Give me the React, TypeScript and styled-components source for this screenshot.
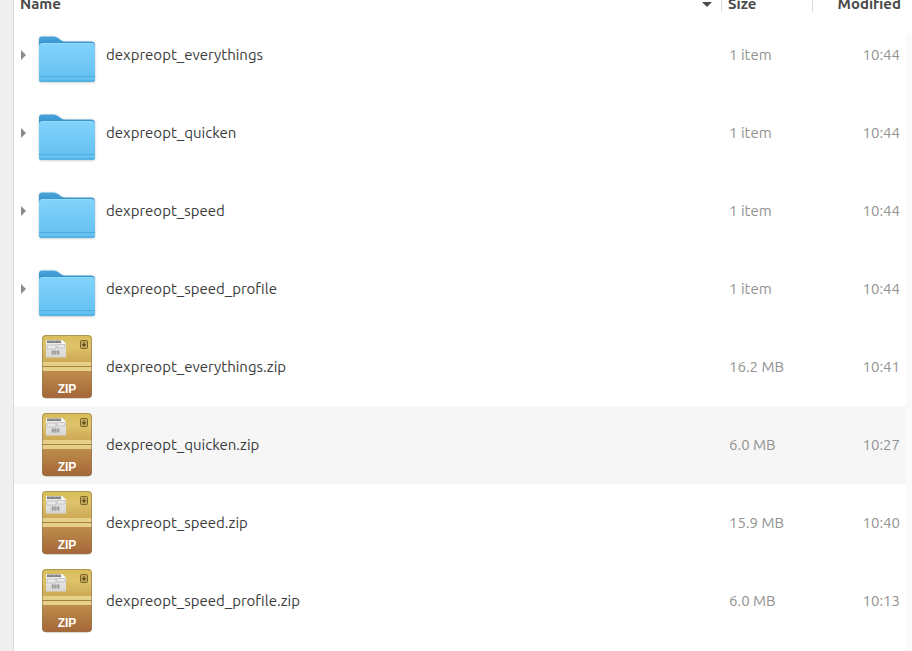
import React from "react";
import styled, { createGlobalStyle } from "styled-components";

const GlobalStyle = createGlobalStyle`
  * { box-sizing: border-box; }
  html, body, #root { height: 100%; }
  body {
    margin: 0;
    background: #ffffff;
    color: #3b3b3b;
    font-family: Ubuntu, "Noto Sans", sans-serif;
    font-size: 15px;
    line-height: 18px;
    overflow: hidden;
  }
`;

const Window = styled.div`
  display: flex;
  min-height: 100%;
`;

const SidebarEdge = styled.aside`
  flex: none;
  width: 14px;
  background: #efefef;
  border-right: 1px solid #dadada;
`;

const FileTable = styled.table`
  display: block;
  flex: 1;
  min-width: 0;
`;

const TableHead = styled.thead`
  display: block;
`;

const TableBody = styled.tbody`
  display: block;
`;

const HeaderRow = styled.tr`
  display: grid;
  grid-template-columns: 1fr 91px 93px;
  height: 16px;
  overflow: hidden;
`;

const HeaderCell = styled.th<{ $divided?: boolean }>`
  display: flex;
  align-items: flex-end;
  height: 12px;
  padding: 0;
  border-right: ${(p) => (p.$divided ? "1px solid #dcdcdc" : "none")};
`;

const SortButton = styled.button<{ $end?: boolean }>`
  display: flex;
  flex: 1;
  align-items: center;
  justify-content: ${(p) => (p.$end ? "flex-end" : "space-between")};
  padding: 0 ${(p) => (p.$end ? "5px" : "9px")} 0 6px;
  border: 0;
  background: none;
  color: #4a4a4a;
  font: inherit;
  font-weight: 700;
  line-height: 16px;
  cursor: pointer;
`;

const FileRow = styled.tr<{ $shaded?: boolean }>`
  display: grid;
  grid-template-columns: 1fr 91px 93px;
  align-items: center;
  height: 78px;
  background: ${(p) => (p.$shaded ? "#f6f6f6" : "transparent")};
`;

const NameCell = styled.td`
  display: flex;
  align-items: center;
  padding: 0 0 0 5px;
`;

const Expander = styled.span`
  display: flex;
  width: 16px;
`;

const ExpandButton = styled.button`
  display: flex;
  padding: 0;
  border: 0;
  background: none;
  cursor: pointer;
`;

const FileName = styled.span`
  padding-left: 7px;
`;

const DetailCell = styled.td<{ $end?: boolean }>`
  padding: 0 6px 0 7px;
  color: #929292;
  text-align: ${(p) => (p.$end ? "right" : "left")};
`;

const ScrollTrough = styled.div`
  flex: none;
  width: 6px;
  margin-top: 35px;
  background: #fafafa;
`;

const FolderIcon = () => (
  <svg width="64" height="64" viewBox="0 0 64 64" aria-hidden="true">
    <defs>
      <linearGradient id="folderFront" x1="0" y1="0" x2="0" y2="1">
        <stop offset="0" stopColor="#82d3fc" />
        <stop offset="1" stopColor="#62bff0" />
      </linearGradient>
      <linearGradient id="folderBack" x1="0" y1="0" x2="0" y2="1">
        <stop offset="0" stopColor="#48a5dc" />
        <stop offset="0.18" stopColor="#3991ca" />
      </linearGradient>
      <filter id="folderShadow" x="-10%" y="-10%" width="120%" height="125%">
        <feDropShadow dx="0" dy="0.5" stdDeviation="1" floodOpacity="0.25" />
      </filter>
    </defs>
    <path
      filter="url(#folderShadow)"
      fill="url(#folderBack)"
      d="M4 56V16.500q0-3 3-3h12q2 0 4 1.500l3 2.200q2 1.300 4 1.300h26q4 0 4 4v33.500q0 3-3 3H7q-3 0-3-3z"
    />
    <path
      fill="url(#folderFront)"
      d="M4 56V24q0-4 4-4h48q4 0 4 4v32q0 3-3 3H7q-3 0-3-3z"
    />
    <path d="M4.500 23q1-2.500 3.500-2.500h48q2.500 0 3.500 2.500" fill="none" stroke="#9bdefe" strokeWidth="0.700" />
    <path d="M4 53.500h56" stroke="#4eabde" />
    <path d="M4 57h56q-0.500 2-3 2H7q-2.500 0-3-2z" fill="#54b3e6" />
  </svg>
);

const ZipIcon = () => (
  <svg width="64" height="64" viewBox="0 0 64 64" aria-hidden="true">
    <defs>
      <linearGradient id="zipTop" x1="0" y1="0" x2="0" y2="1">
        <stop offset="0" stopColor="#d7bd58" />
        <stop offset="0.4" stopColor="#dfc36a" />
        <stop offset="1" stopColor="#cba754" />
      </linearGradient>
      <linearGradient id="zipBottom" x1="0" y1="0" x2="0" y2="1">
        <stop offset="0" stopColor="#be8e4b" />
        <stop offset="1" stopColor="#a46639" />
      </linearGradient>
      <linearGradient id="zipLabel" x1="0" y1="0" x2="0" y2="1">
        <stop offset="0" stopColor="#f1f1f0" />
        <stop offset="1" stopColor="#d5d5d4" />
      </linearGradient>
    </defs>
    <path d="M7 28V4q0-4 4-4h42q4 0 4 4v24z" fill="url(#zipTop)" />
    <path d="M7 35h50v24q0 4-4 4H11q-4 0-4-4z" fill="url(#zipBottom)" />
    <path d="M7 27h50v9H7z" fill="#e6cf88" />
    <path d="M7 31.500h50" stroke="#a5813f" />
    <rect x="7.500" y="0.500" width="49" height="62.500" rx="3.500" fill="none" stroke="#8d7851" strokeOpacity="0.600" />
    <path d="M11 5h16l4 4v13.500H11z" fill="url(#zipLabel)" />
    <path d="M27 5v4h4z" fill="#ffffff" />
    <path d="M12 5.500h14V8H12z" fill="#808080" />
    <path d="M14 6.700h2M18 6.700h3M23 6.700h2" stroke="#a8a8a8" strokeWidth="0.700" />
    <path d="M12 10h9v4h-9zM22 9.500h8V13h-8z" fill="#e9e9e9" stroke="#b6b6b6" strokeWidth="0.700" />
    <path d="M16.500 15.500h8v4h-8z" fill="#b4b4b4" />
    <path d="M17.500 15.500v4M20 15.500v4M23.500 15.500v4" stroke="#8d8d8d" strokeWidth="0.800" />
    <rect x="45.500" y="5.500" width="7" height="8" rx="1" fill="#c3a755" stroke="#76622d" />
    <path d="M49 7v4M47.500 9.500L49 11.500l1.500-2z" fill="#5c4a20" stroke="#5c4a20" />
    <text
      x="32"
      y="58"
      textAnchor="middle"
      fill="#ffffff"
      fontFamily="Liberation Sans, Arial, sans-serif"
      fontSize="12"
      fontWeight="700"
    >
      ZIP
    </text>
  </svg>
);

const SortArrow = () => (
  <svg width="10" height="5" viewBox="0 0 10 5" aria-hidden="true">
    <path d="M0 0h10L5 5z" fill="#4a4a4a" />
  </svg>
);

const ExpandArrow = () => (
  <svg width="8" height="10" viewBox="0 0 8 10" aria-hidden="true">
    <path d="M2 0l5 5-5 5z" fill="#8b8b8b" />
  </svg>
);

type Entry = {
  name: string;
  kind: "folder" | "zip";
  size: string;
  modified: string;
  shaded?: boolean;
};

const entries: Entry[] = [
  { name: "dexpreopt_everythings", kind: "folder", size: "1 item", modified: "10:44" },
  { name: "dexpreopt_quicken", kind: "folder", size: "1 item", modified: "10:44" },
  { name: "dexpreopt_speed", kind: "folder", size: "1 item", modified: "10:44" },
  { name: "dexpreopt_speed_profile", kind: "folder", size: "1 item", modified: "10:44" },
  { name: "dexpreopt_everythings.zip", kind: "zip", size: "16.2 MB", modified: "10:41" },
  { name: "dexpreopt_quicken.zip", kind: "zip", size: "6.0 MB", modified: "10:27", shaded: true },
  { name: "dexpreopt_speed.zip", kind: "zip", size: "15.9 MB", modified: "10:40" },
  { name: "dexpreopt_speed_profile.zip", kind: "zip", size: "6.0 MB", modified: "10:13" },
];

export default function App() {
  return (
    <Window>
      <GlobalStyle />
      <SidebarEdge />
      <FileTable>
        <TableHead>
          <HeaderRow>
            <HeaderCell $divided scope="col">
              <SortButton type="button">
                Name
                <SortArrow />
              </SortButton>
            </HeaderCell>
            <HeaderCell $divided scope="col">
              <SortButton type="button">Size</SortButton>
            </HeaderCell>
            <HeaderCell scope="col">
              <SortButton type="button" $end>
                Modified
              </SortButton>
            </HeaderCell>
          </HeaderRow>
        </TableHead>
        <TableBody>
          {entries.map((entry) => (
            <FileRow key={entry.name} $shaded={entry.shaded}>
              <NameCell>
                <Expander>
                  {entry.kind === "folder" && (
                    <ExpandButton type="button" aria-label={`Expand ${entry.name}`}>
                      <ExpandArrow />
                    </ExpandButton>
                  )}
                </Expander>
                {entry.kind === "folder" ? <FolderIcon /> : <ZipIcon />}
                <FileName>{entry.name}</FileName>
              </NameCell>
              <DetailCell>{entry.size}</DetailCell>
              <DetailCell $end>{entry.modified}</DetailCell>
            </FileRow>
          ))}
        </TableBody>
      </FileTable>
      <ScrollTrough />
    </Window>
  );
}
